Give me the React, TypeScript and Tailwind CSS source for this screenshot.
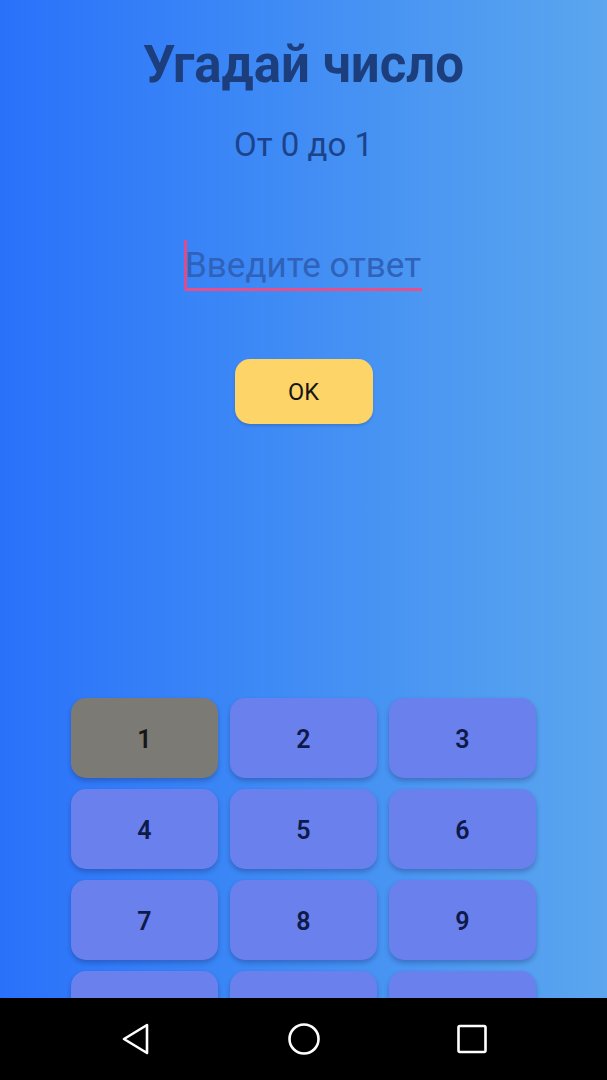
import { useState } from "react";

// last row sits under the nav bar, its labels are not visible
const keys = ["1", "2", "3", "4", "5", "6", "7", "8", "9", "", "", ""];

export default function App() {
  const [answer, setAnswer] = useState("");
  const [pressed, setPressed] = useState(0);

  return (
    <div className="w-full h-[1080px] flex flex-col font-['Roboto','Noto_Sans',sans-serif]">
      {/* Game screen */}
      <div className="h-[998px] shrink-0 overflow-hidden bg-gradient-to-r from-[#2a71fa] to-[#5ba6ee] flex flex-col items-center">
        <h1 className="shrink-0 pt-[33px] text-[51px] leading-[64px] font-bold text-[#1d3e7c]">
          Угадай число
        </h1>
        <p className="shrink-0 mt-[28px] text-[33px] leading-[40px] text-[#1c438a]">От 0 до 1</p>

        <div className="shrink-0 mt-[80px] relative w-[237px] border-b-[3px] border-[#e4508c]">
          <span className="absolute left-[-1px] top-[-5px] w-[3px] h-[50px] bg-[#dc4c8c]" />
          <input
            value={answer}
            onChange={(e) => setAnswer(e.target.value)}
            placeholder="Введите ответ"
            className="w-full h-[43px] pb-[3px] bg-transparent outline-none text-[35px] leading-[40px] text-[#1c438a] placeholder:text-[#2f62b8] caret-transparent"
          />
        </div>

        <button className="shrink-0 mt-[68px] w-[138px] h-[65px] pt-[3px] rounded-[15px] bg-[#fdd468] text-[23.5px] text-[#151515] shadow-[0_2px_3px_rgba(0,0,0,0.15)]">
          OK
        </button>

        {/* Keypad */}
        <div className="shrink-0 mt-[274px] grid grid-cols-[147px_147px_147px] gap-x-[12px] gap-y-[11px]">
          {keys.map((k, i) => (
            <button
              key={i}
              onClick={() => setPressed(i)}
              className={`h-[80px] pt-[3px] rounded-[15px] text-[25px] font-semibold shadow-[0_3px_5px_rgba(20,30,90,0.3)] ${
                pressed === i ? "bg-[#7b7a74] text-[#161616]" : "bg-[#6a80ec] text-[#0e1a4a]"
              }`}
            >
              {k}
            </button>
          ))}
        </div>
      </div>

      {/* Navigation bar */}
      <div className="h-[82px] bg-black flex items-center justify-center">
        <div className="w-[168px] flex justify-center">
          <svg width="30" height="34" viewBox="0 0 30 34" fill="none" stroke="white" strokeWidth="2.6" strokeLinejoin="round">
            <path d="M26 3 L3 17 L26 31 Z" />
          </svg>
        </div>
        <div className="w-[168px] flex justify-center">
          <svg width="34" height="34" viewBox="0 0 34 34" fill="none" stroke="white" strokeWidth="2.6">
            <circle cx="17" cy="17" r="14.5" />
          </svg>
        </div>
        <div className="w-[168px] flex justify-center">
          <svg width="32" height="32" viewBox="0 0 32 32" fill="none" stroke="white" strokeWidth="2.6">
            <rect x="2.5" y="3" width="27" height="26" rx="1.5" />
          </svg>
        </div>
      </div>
    </div>
  );
}
